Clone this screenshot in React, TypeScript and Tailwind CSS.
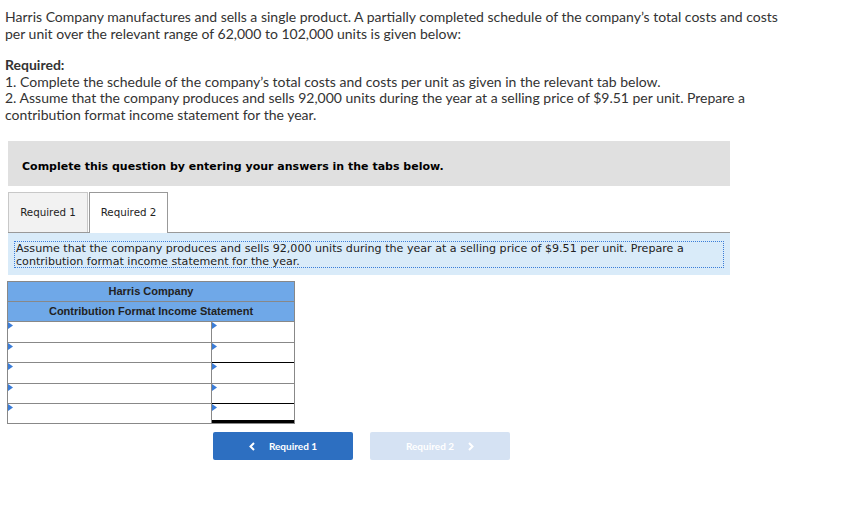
import React from "react";

const Arrow = () => (
  <svg width="5" height="7" viewBox="0 0 5 7" className="absolute left-0 top-0">
    <polygon points="0,0 5,3.5 0,7" fill="#3b7dd8" />
  </svg>
);

const Chevron = ({ dir }: { dir: "l" | "r" }) => (
  <svg width="6" height="9" viewBox="0 0 6 9">
    {dir === "l" ? (
      <polyline points="5,1 1.5,4.5 5,8" fill="none" stroke="white" strokeWidth="2" />
    ) : (
      <polyline points="1,1 4.5,4.5 1,8" fill="none" stroke="white" strokeWidth="2" />
    )}
  </svg>
);

export default function App() {
  const rows = [
    { t: "border-t-[#888]", h: "h-[21px]" },
    { t: "border-t-[#888]", h: "h-[20px]" },
    { t: "border-t-black", h: "h-[21px]" },
    { t: "border-t-[#888]", h: "h-[20px]" },
    { t: "border-t-black", h: "h-[20px]" },
  ];
  return (
    <div className="w-[860px] h-[517px] bg-white text-[#333] relative overflow-hidden">
      <div className="pl-[5px] pt-[9px] w-[795px] text-[14px] leading-[16.5px] text-[#333]" style={{ fontFamily: "Lato, 'Open Sans', sans-serif" }}>
        <p>
          Harris Company manufactures and sells a single product. A partially completed schedule of the company’s total costs and costs per unit over the relevant range of 62,000 to 102,000 units is given below:
        </p>
        <p className="mt-[15px] font-bold">Required:</p>
        <p>1. Complete the schedule of the company’s total costs and costs per unit as given in the relevant tab below.</p>
        <p>
          2. Assume that the company produces and sells 92,000 units during the year at a selling price of $9.51 per unit. Prepare a contribution format income statement for the year.
        </p>
      </div>

      <div className="mt-[18px] ml-[8px] w-[722px]" style={{ fontFamily: "Verdana, 'DejaVu Sans', sans-serif" }}>
        <div className="h-[45px] bg-[#e0e0e0] pt-[12px] pl-[14px]">
          <span className="text-[11px] font-bold text-black">Complete this question by entering your answers in the tabs below.</span>
        </div>
        <div className="mt-[6px] flex h-[40px] items-end">
          <div className="w-[80px] h-[40px] bg-[#f2f2f2] border border-[#c8c8c8] border-b-0 flex items-center justify-center text-[10.3px] text-[#222]">
            Required 1
          </div>
          <div className="ml-[1px] w-[79px] h-[41px] bg-white border border-[#999] border-b-0 flex items-center justify-center text-[10.3px] text-[#222] relative z-10 -mb-px">
            Required 2
          </div>
        </div>
        <div className="border-t border-[#999] bg-[#d9ebf9] h-[43px] pt-[8px] px-[6px]">
          <div className="border border-dotted border-[#3b7dd8] pl-[1px] pt-[1px] text-[11.1px] leading-[12.5px] text-[#222] h-[27px]">
            Assume that the company produces and sells 92,000 units during the year at a selling price of $9.51 per unit. Prepare a<br />
            contribution format income statement for the year.
          </div>
        </div>
      </div>

      <div className="mt-[6px] ml-[7px] w-[288px] border border-[#888]" style={{ fontFamily: "Arial, 'Liberation Sans', sans-serif" }}>
        <div className="h-[20px] bg-[#6fa8e8] border-b border-[#888] flex items-center justify-center text-[11px] font-bold text-[#222]">
          Harris Company
        </div>
        <div className="h-[19px] bg-[#6fa8e8] flex items-center justify-center text-[11px] font-bold text-[#222]">
          Contribution Format Income Statement
        </div>
        {rows.map((r, i) => (
          <div key={i} className={`flex ${r.h}`}>
            <div className="relative w-[204px] border-t border-r border-[#888] bg-white">
              <Arrow />
            </div>
            <div className={`relative flex-1 border-t bg-white ${r.t} ${i === 4 ? "border-b-[3px] border-b-black" : ""}`}>
              <Arrow />
            </div>
          </div>
        ))}
      </div>

      <div className="absolute left-[213px] top-[432px] flex gap-[17px]" style={{ fontFamily: "Lato, 'Open Sans', sans-serif" }}>
        <div className="w-[140px] h-[28px] bg-[#2d6fc1] rounded-[2px] flex items-center justify-center gap-[14px] text-white text-[10px] font-bold">
          <Chevron dir="l" />
          <span>Required 1</span>
        </div>
        <div className="w-[140px] h-[28px] bg-[#d5e2f3] rounded-[2px] flex items-center justify-center gap-[14px] text-white text-[10px] font-bold">
          <span>Required 2</span>
          <Chevron dir="r" />
        </div>
      </div>
    </div>
  );
}
